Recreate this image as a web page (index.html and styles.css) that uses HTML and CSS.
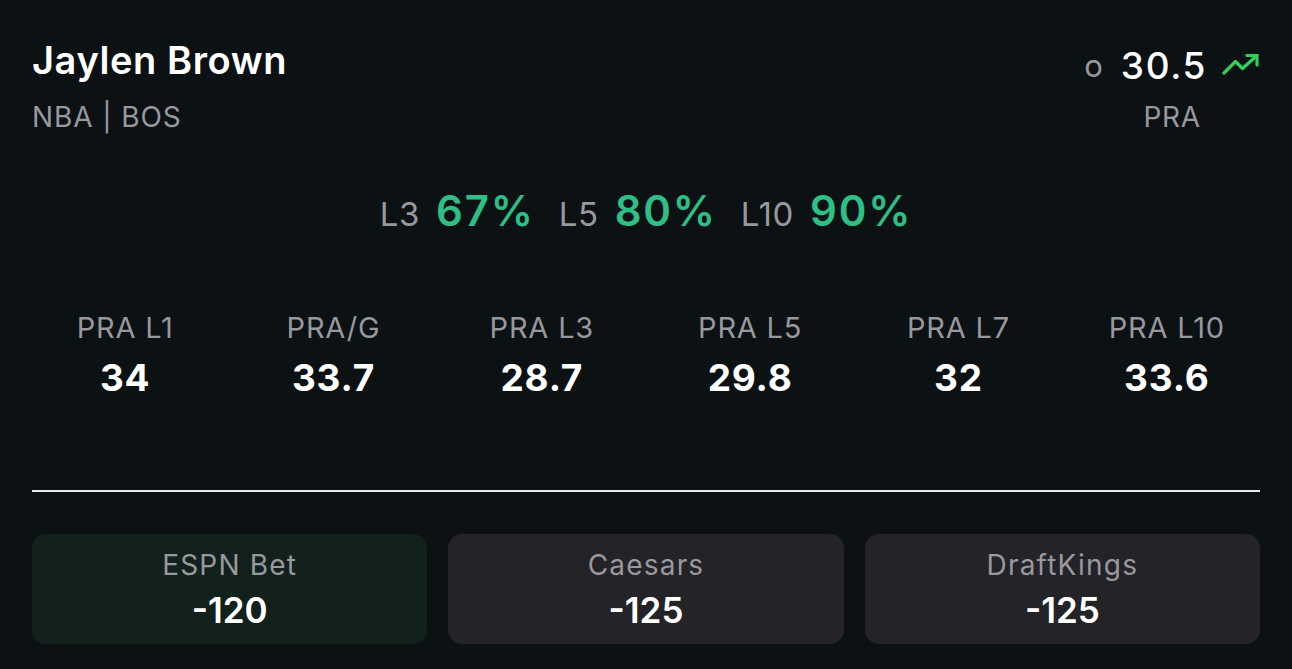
FILE: index.html
```html
<!DOCTYPE html>
<html lang="en">
<head>
<meta charset="utf-8">
<title>Jaylen Brown PRA</title>
<link rel="stylesheet" href="styles.css">
</head>
<body>
<main class="card">
  <header class="head">
    <div class="player">
      <h1 class="name">Jaylen Brown</h1>
      <div class="sub">NBA | BOS</div>
    </div>
    <div class="line">
      <div class="line-row">
        <span class="ou">o</span>
        <span class="num">30.5</span>
        <svg class="trend" width="38" height="22" viewBox="0 0 38 22" aria-hidden="true">
          <path d="M2 19 L13.5 7.5 L20.5 14.5 L35 1.5" fill="none" stroke="#30d158" stroke-width="3.2" stroke-linecap="round" stroke-linejoin="round"/>
          <path d="M25 1.5 L35 1.5 L35 11" fill="none" stroke="#30d158" stroke-width="3.2" stroke-linecap="round" stroke-linejoin="round"/>
        </svg>
      </div>
      <div class="stat-type">PRA</div>
    </div>
  </header>

  <section class="hits">
    <span class="hit-label">L3</span><span class="hit-val">67%</span>
    <span class="hit-label">L5</span><span class="hit-val">80%</span>
    <span class="hit-label">L10</span><span class="hit-val">90%</span>
  </section>

  <section class="stats">
    <div class="stat"><div class="stat-label">PRA L1</div><div class="stat-val">34</div></div>
    <div class="stat"><div class="stat-label">PRA/G</div><div class="stat-val">33.7</div></div>
    <div class="stat"><div class="stat-label">PRA L3</div><div class="stat-val">28.7</div></div>
    <div class="stat"><div class="stat-label">PRA L5</div><div class="stat-val">29.8</div></div>
    <div class="stat"><div class="stat-label">PRA L7</div><div class="stat-val">32</div></div>
    <div class="stat"><div class="stat-label">PRA L10</div><div class="stat-val">33.6</div></div>
  </section>

  <hr class="divider">

  <section class="books">
    <div class="book book-best"><div class="book-name">ESPN Bet</div><div class="book-odds">-120</div></div>
    <div class="book"><div class="book-name">Caesars</div><div class="book-odds">-125</div></div>
    <div class="book"><div class="book-name">DraftKings</div><div class="book-odds">-125</div></div>
  </section>
</main>
</body>
</html>
```

FILE: styles.css
```css
* { box-sizing: border-box; }
html, body {
  margin: 0;
  padding: 0;
  background: #0c1114;
}
body {
  font-family: Inter, "Noto Sans", "Liberation Sans", sans-serif;
  color: #ffffff;
  width: 1292px;
  height: 669px;
  overflow: hidden;
}
.card {
  padding: 36px 32px 0 32px;
}
.head {
  display: flex;
  justify-content: space-between;
  align-items: flex-start;
}
.name {
  margin: 0;
  font-size: 38px;
  font-weight: 600;
  line-height: 48px;
  letter-spacing: 0.6px;
}
.sub {
  margin-top: 15px;
  font-size: 28px;
  line-height: 36px;
  letter-spacing: 0.9px;
  color: #98989f;
}
.line {
  display: flex;
  flex-direction: column;
  align-items: center;
  padding-top: 5px;
}
.line-row {
  display: flex;
  align-items: center;
  height: 48px;
}
.ou {
  font-size: 31px;
  color: #98989f;
  margin-right: 18px;
}
.num {
  font-size: 37px;
  font-weight: 500;
  letter-spacing: 1.6px;
}
.trend {
  margin-left: 15px;
  margin-top: 0;
}
.stat-type {
  margin-top: 10px;
  font-size: 28px;
  line-height: 36px;
  letter-spacing: 0.6px;
  color: #98989f;
}
.hits {
  display: flex;
  justify-content: center;
  align-items: baseline;
  margin-top: 48px;
  line-height: 56px;
}
.hit-label {
  font-size: 33px;
  letter-spacing: 0.6px;
  color: #98989f;
  margin-right: 16px;
}
.hit-val {
  font-size: 42px;
  font-weight: 600;
  letter-spacing: 1.8px;
  color: #2dbf86;
  margin-right: 24px;
}
.hit-val:last-child { margin-right: 0; }
.stats {
  display: grid;
  grid-template-columns: repeat(6, 1fr);
  margin: 68px -11px 0 -11px;
}
.stat {
  text-align: center;
}
.stat-label {
  font-size: 29px;
  line-height: 36px;
  letter-spacing: 0.8px;
  color: #98989f;
}
.stat-val {
  margin-top: 10px;
  font-size: 37px;
  font-weight: 700;
  line-height: 44px;
  letter-spacing: 0.8px;
}
.divider {
  margin: 90px 0 0 0;
  border: 0;
  height: 2px;
  background: #e8e8ea;
}
.books {
  display: grid;
  grid-template-columns: repeat(3, 1fr);
  gap: 21px;
  margin-top: 42px;
}
.book {
  height: 110px;
  border-radius: 14px;
  background: #232328;
  display: flex;
  flex-direction: column;
  align-items: center;
  justify-content: center;
}
.book-best {
  background: #13211d;
}
.book-name {
  font-size: 28px;
  line-height: 36px;
  letter-spacing: 1.2px;
  color: #98989f;
}
.book-odds {
  margin-top: 6px;
  font-size: 35px;
  font-weight: 600;
  line-height: 42px;
}
```
